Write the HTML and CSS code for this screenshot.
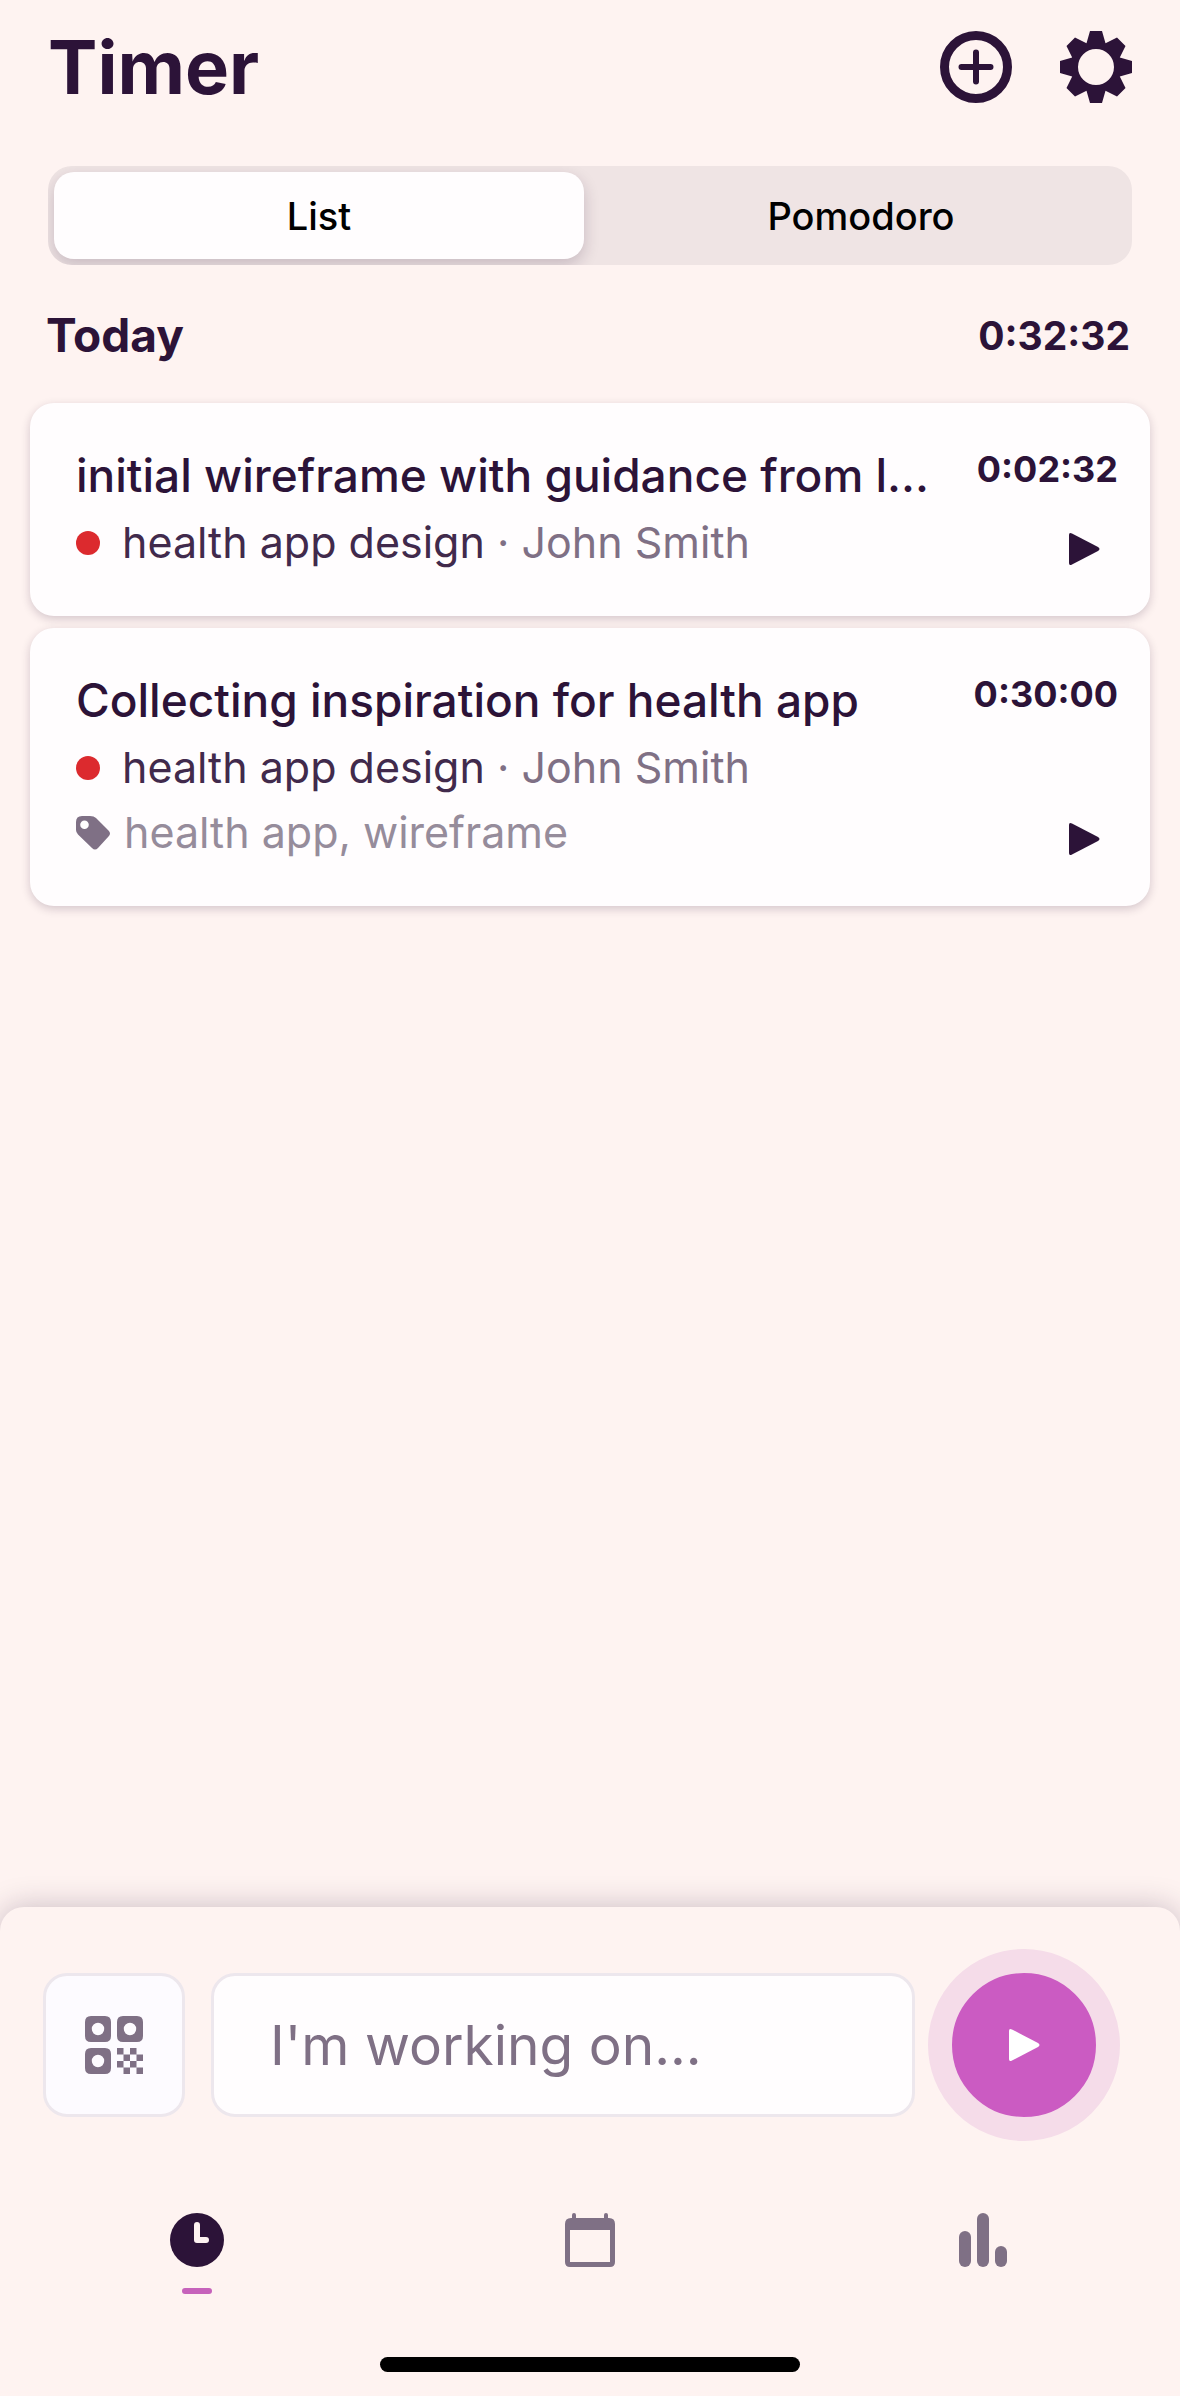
FILE: index.html
```html
<!DOCTYPE html>
<html lang="en">
<head>
  <meta charset="UTF-8" />
  <meta name="viewport" content="width=device-width, initial-scale=1.0"/>
  <title>Timer</title>
  <link rel="stylesheet" href="styles.css">
</head>
<body>
  <!-- Header -->
  <header class="header">
    <h1 class="title">Timer</h1>
    <div class="actions">
      <button class="icon-btn" type="button" aria-label="Add entry">
        <svg width="72" height="72" viewBox="0 0 72 72" fill="none" stroke="currentColor">
          <circle cx="36" cy="36" r="31.5" stroke-width="9"/>
          <path d="M36 21.5v29M21.5 36h29" stroke-width="6" stroke-linecap="round"/>
        </svg>
      </button>
      <button class="icon-btn" type="button" aria-label="Settings">
        <svg width="72" height="72" viewBox="0 0 72 72" fill="currentColor" fill-rule="evenodd">
          <path d="M30 0h12l3.5 12.2L57 6.5l8.5 8.5-5.7 11.5L72 30v12l-12.2 3.5L65.5 57 57 65.5 45.5 59.8 42 72H30l-3.5-12.2L15 65.5 6.5 57l5.7-11.5L0 42V30l12.2-3.5L6.5 15 15 6.5l11.5 5.7zM36 18a18 18 0 1 0 0 36 18 18 0 0 0 0-36z"/>
        </svg>
      </button>
    </div>
  </header>

  <!-- Time entries -->
  <main class="content">
    <div class="tabs">
      <button class="tab active" type="button">List</button>
      <button class="tab" type="button">Pomodoro</button>
    </div>

    <div class="day">
      <h2>Today</h2>
      <span class="total">0:32:32</span>
    </div>

    <div class="entries">
      <article class="entry">
        <div class="info">
          <h3>initial wireframe with guidance from l...</h3>
          <p class="project"><span class="dot"></span>health app design <span class="client">· John Smith</span></p>
        </div>
        <div class="side">
          <span class="time">0:02:32</span>
          <button class="play" type="button" aria-label="Start entry">
            <svg width="32" height="34" viewBox="0 0 32 34" fill="currentColor"><path d="M1 3Q1 0 4 1.5L30 15Q33 17 30 19L4 32.5Q1 34 1 31z"/></svg>
          </button>
        </div>
      </article>

      <article class="entry">
        <div class="info">
          <h3>Collecting inspiration for health app</h3>
          <p class="project"><span class="dot"></span>health app design <span class="client">· John Smith</span></p>
          <p class="tags">
            <svg width="34" height="34" viewBox="0 0 34 34" fill="currentColor" fill-rule="evenodd"><path d="M6 0h8q4 0 6 2l12.500 12.500q3 3 0 6L22 32q-3 3-6 0L2 18.500Q0 16.500 0 14V6Q0 0 6 0zM8.500 4.500a4.300 4.300 0 1 0 0 8.600 4.300 4.300 0 0 0 0-8.600z"/></svg>
            health app, wireframe
          </p>
        </div>
        <div class="side">
          <span class="time">0:30:00</span>
          <button class="play" type="button" aria-label="Start entry">
            <svg width="32" height="34" viewBox="0 0 32 34" fill="currentColor"><path d="M1 3Q1 0 4 1.5L30 15Q33 17 30 19L4 32.5Q1 34 1 31z"/></svg>
          </button>
        </div>
      </article>
    </div>
  </main>

  <!-- Bottom panel -->
  <footer class="panel">
    <form class="tracker">
      <button class="scan" type="button" aria-label="Scan code">
        <svg width="58" height="58" viewBox="0 0 58 58" fill="currentColor" fill-rule="evenodd">
          <path d="M6 0h14q6 0 6 6v14q0 6-6 6H6q-6 0-6-6V6q0-6 6-6zM13 6.800a6.200 6.200 0 1 0 0 12.400A6.200 6.200 0 0 0 13 6.800z"/>
          <path d="M38 0h14q6 0 6 6v14q0 6-6 6H38q-6 0-6-6V6q0-6 6-6zM45 6.800a6.200 6.200 0 1 0 0 12.400A6.200 6.200 0 0 0 45 6.800z"/>
          <path d="M6 32h14q6 0 6 6v14q0 6-6 6H6q-6 0-6-6V38q0-6 6-6zM13 38.800a6.200 6.200 0 1 0 0 12.400A6.200 6.200 0 0 0 13 38.800z"/>
          <path d="M32 32h6.500v6.500H32zM45 32h6.500v6.500H45zM38.500 38.500H45V45h-6.500zM51.500 38.500H58V45h-6.500zM32 45h6.500v6.500H32zM45 45h6.500v6.500H45zM38.500 51.500H45V58h-6.500zM51.500 51.500H58V58h-6.500z"/>
        </svg>
      </button>
      <input class="task" type="text" placeholder="I'm working on..." aria-label="What are you working on">
      <button class="start" type="button" aria-label="Start timer">
        <svg width="32" height="34" viewBox="0 0 32 34" fill="currentColor"><path d="M1 3Q1 0 4 1.5L30 15Q33 17 30 19L4 32.5Q1 34 1 31z"/></svg>
      </button>
    </form>

    <nav class="nav">
      <a href="#" class="nav-item active" aria-label="Timer">
        <svg width="54" height="54" viewBox="0 0 54 54"><circle cx="27" cy="27" r="27" fill="currentColor"/><path d="M27 12v15h9" fill="none" stroke="#fef3f1" stroke-width="6" stroke-linecap="round" stroke-linejoin="round"/></svg>
      </a>
      <a href="#" class="nav-item" aria-label="Calendar">
        <svg width="50" height="54" viewBox="0 0 50 54" fill="currentColor" fill-rule="evenodd"><path d="M7 5V2q0-2 2-2t2 2v3h28V2q0-2 2-2t2 2v3h1q6 0 6 6v38q0 5-5 5H5q-5 0-5-5V11q0-6 6-6zM5 17v32h40V17z"/></svg>
      </a>
      <a href="#" class="nav-item" aria-label="Reports">
        <svg width="48" height="54" viewBox="0 0 48 54" fill="currentColor"><rect y="18" width="12" height="36" rx="6"/><rect x="18" width="12" height="54" rx="6"/><rect x="36" y="33" width="12" height="21" rx="6"/></svg>
      </a>
    </nav>
    <div class="home-bar"></div>
  </footer>
</body>
</html>
```

FILE: styles.css
```css
* {
  margin: 0;
  padding: 0;
  box-sizing: border-box;
}

body {
  min-height: 100vh;
  display: flex;
  flex-direction: column;
  font-family: Inter, 'Liberation Sans', sans-serif;
  background: #fef3f1;
  color: #2c1338;
}

button {
  border: none;
  background: none;
  font: inherit;
  color: inherit;
  cursor: pointer;
}

svg {
  display: block;
  flex: none;
}

.header {
  display: flex;
  justify-content: space-between;
  align-items: center;
  padding: 20px 48px 0;
}

.title {
  font-size: 74px;
  line-height: 94px;
  font-weight: 700;
}

.actions {
  display: flex;
  gap: 48px;
}

.content {
  flex: 1;
}

/* List / Pomodoro switch */
.tabs {
  display: flex;
  margin: 52px 48px 0;
  padding: 6px 0;
  border-radius: 24px;
  background: #efe4e4;
  overflow: hidden;
}

.tab {
  flex: 1;
  height: 87px;
  margin: 0 6px;
  border-radius: 20px;
  font-size: 38px;
  font-weight: 500;
  color: #000;
}

.tab.active {
  background: #fffdfe;
  box-shadow: 0 6px 16px rgba(44, 19, 56, 0.2);
}

.day {
  display: flex;
  justify-content: space-between;
  align-items: center;
  padding: 40px 50px 38px 46px;
}

.day h2 {
  font-size: 46px;
  line-height: 60px;
  font-weight: 700;
}

.total {
  font-size: 39px;
  font-weight: 700;
}

/* Entry cards */
.entries {
  display: flex;
  flex-direction: column;
  gap: 12px;
  padding: 0 30px;
}

.entry {
  display: flex;
  justify-content: space-between;
  gap: 24px;
  padding: 37px 32px 41px 46px;
  border-radius: 24px;
  background: #fffdfe;
  box-shadow: 0 3px 10px rgba(44, 19, 56, 0.2);
}

.info {
  flex: 1;
  min-width: 0;
}

.info h3 {
  font-size: 46px;
  line-height: 70px;
  font-weight: 500;
  white-space: nowrap;
  overflow: hidden;
  text-overflow: ellipsis;
}

.project,
.tags {
  display: flex;
  align-items: center;
  font-size: 43px;
  line-height: 65px;
  color: #412a4c;
  white-space: pre;
}

.dot {
  width: 24px;
  height: 24px;
  margin-right: 22px;
  border-radius: 50%;
  background: #dc2a2e;
}

.client {
  color: #7f7085;
}

.tags {
  gap: 14px;
  color: #968c9b;
  white-space: normal;
}

.tags svg {
  color: #7f7085;
}

.side {
  display: flex;
  flex-direction: column;
  justify-content: space-between;
  align-items: flex-end;
}

.time {
  font-size: 36px;
  line-height: 58px;
  font-weight: 700;
}

.play {
  padding: 9px 18px;
}

/* Bottom panel */
.panel {
  padding: 42px 0 24px;
  border-radius: 24px 24px 0 0;
  background: #fef3f1;
  box-shadow: 0 0 30px rgba(44, 19, 56, 0.25);
}

.tracker {
  display: flex;
  align-items: center;
  padding: 0 60px 0 43px;
}

.scan,
.task {
  height: 144px;
  border: 3px solid #ede7ed;
  border-radius: 24px;
}

.scan {
  display: flex;
  flex: none;
  align-items: center;
  justify-content: center;
  width: 142px;
  margin-right: 26px;
  background: #fdfbff;
  color: #7f7085;
}

.task {
  flex: 1;
  min-width: 0;
  margin-right: 13px;
  padding: 0 56px;
  background: #fffdfe;
  font: 400 55px Inter, 'Liberation Sans', sans-serif;
  color: #2c1338;
}

.task::placeholder {
  color: #7f7085;
  opacity: 1;
}

.start {
  display: flex;
  flex: none;
  align-items: center;
  justify-content: center;
  width: 192px;
  height: 192px;
  border: 24px solid #f5dce9;
  border-radius: 50%;
  background: #cb5bc2;
  color: #fff;
}

.nav {
  display: flex;
  margin-top: 72px;
}

.nav-item {
  display: flex;
  flex: 1;
  flex-direction: column;
  align-items: center;
  gap: 21px;
  color: #7f7085;
}

.nav-item.active {
  color: #2c1338;
}

.nav-item.active::after {
  content: "";
  width: 30px;
  height: 6px;
  border-radius: 3px;
  background: #c662bb;
}

.home-bar {
  width: 420px;
  max-width: 60%;
  height: 15px;
  margin: 63px auto 0;
  border-radius: 8px;
  background: #000;
}
```
